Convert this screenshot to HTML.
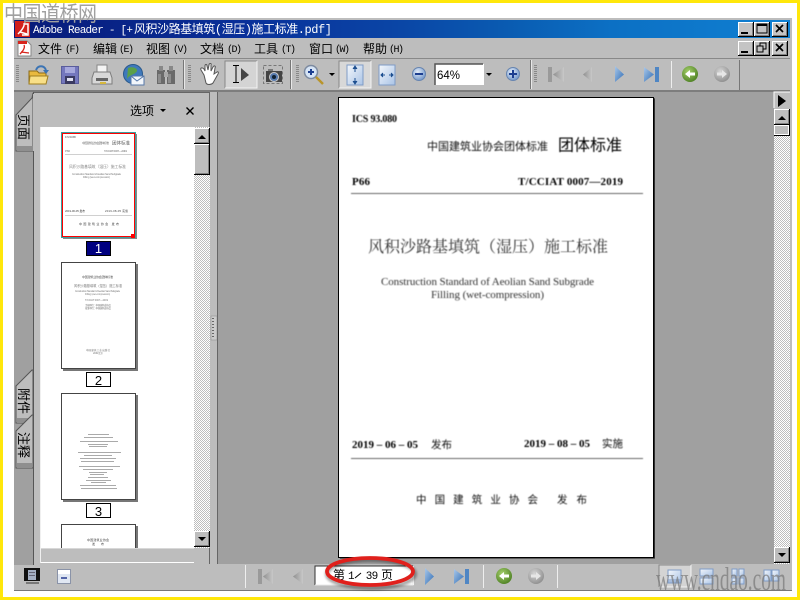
<!DOCTYPE html>
<html><head><meta charset="utf-8"><title>Adobe Reader</title>
<style>
html,body{margin:0;padding:0;background:#fff;width:800px;height:600px;overflow:hidden}
svg{display:block}
text{font-family:"Liberation Sans","WenQuanYi Zen Hei","Noto Sans CJK SC",sans-serif;fill:#000}
.m{font-family:"Liberation Mono","WenQuanYi Zen Hei",monospace}
.u{font-size:12px;font-family:"WenQuanYi Zen Hei","Noto Sans CJK SC",sans-serif}
.p{font-size:10px;font-family:"Liberation Mono",monospace}
.s{font-family:"Liberation Serif","Noto Serif CJK SC",serif}
.t{font-family:"Liberation Sans","Noto Sans CJK SC",sans-serif;font-size:3px;fill:#777}
</style></head><body>
<svg width="800" height="600" viewBox="0 0 800 600">
<defs>
<linearGradient id="tb" x1="0" x2="1" y1="0" y2="0"><stop offset="0" stop-color="#081a78"/><stop offset=".3" stop-color="#09309a"/><stop offset=".5" stop-color="#0a46a6"/><stop offset=".64" stop-color="#0a5cb2"/><stop offset=".77" stop-color="#0c70c4"/><stop offset="1" stop-color="#0f80d2"/></linearGradient>
<pattern id="ck" width="2" height="2" patternUnits="userSpaceOnUse"><rect width="2" height="2" fill="#fff"/><rect width="1" height="1" fill="#bdbdbd"/><rect x="1" y="1" width="1" height="1" fill="#bdbdbd"/></pattern>
<linearGradient id="blue" x1="0" x2="1" y1="0" y2="1"><stop offset="0" stop-color="#a9c8ea"/><stop offset="1" stop-color="#2f6cb4"/></linearGradient>
<linearGradient id="gr" x1="0" x2="1" y1="0" y2="0"><stop offset="0" stop-color="#8f8f8f"/><stop offset="1" stop-color="#c8c8c8"/></linearGradient>
<linearGradient id="pg" x1="0" x2="1" y1="0" y2="1"><stop offset="0" stop-color="#f4f7fb"/><stop offset="1" stop-color="#a9c3e6"/></linearGradient>
<radialGradient id="gc" cx=".4" cy=".35" r=".7"><stop offset="0" stop-color="#a5cf6b"/><stop offset="1" stop-color="#4c7f22"/></radialGradient>
<radialGradient id="gg" cx=".4" cy=".35" r=".7"><stop offset="0" stop-color="#d6d6d6"/><stop offset="1" stop-color="#8c8c8c"/></radialGradient>
<radialGradient id="bc" cx=".4" cy=".35" r=".7"><stop offset="0" stop-color="#e4edf8"/><stop offset="1" stop-color="#6d93c8"/></radialGradient>
<filter id="bl" x="-5%" y="-5%" width="110%" height="110%"><feGaussianBlur stdDeviation=".42"/></filter>
<filter id="bl2" x="-5%" y="-5%" width="110%" height="110%"><feGaussianBlur stdDeviation=".25"/></filter>
<filter id="sh" x="-10%" y="-30%" width="120%" height="160%"><feGaussianBlur stdDeviation="1.300"/></filter>
<g id="wb"><rect width="16" height="15" fill="#000"/><rect width="15" height="14" fill="#fff"/><rect x="1" y="1" width="14" height="13" fill="#808080"/><rect x="1" y="1" width="13" height="12" fill="#c4c4c4"/></g>
<g id="sb"><rect width="16" height="16" fill="#000"/><rect width="15" height="15" fill="#fff"/><rect x="1" y="1" width="14" height="14" fill="#808080"/><rect x="1" y="1" width="13" height="13" fill="#bdbdbd"/></g>
</defs>

<!-- frame -->
<rect width="800" height="600" fill="#ffe70a"/>
<rect x="3" y="3" width="794" height="594" fill="#fff"/>
<!-- window -->
<rect x="14" y="18" width="778" height="573" fill="#bdbdbd"/>
<rect x="14" y="590" width="778" height="1" fill="#777"/>
<!-- title -->
<rect x="14" y="20" width="776" height="18" fill="url(#tb)"/>
<rect x="15" y="21" width="15" height="16" fill="#d2201c"/>
<path d="M18 34 C22 30 25 26 24 23 M20 32 L27 34 M25 24 L28 24 L28 35 L22 35" stroke="#fff" stroke-width="1.500" fill="none"/>
<text class="m" x="33" y="33" textLength="100" style="font-size:11px;fill:#fff">Adobe Reader - [+</text>
<text class="m" x="134" y="33" textLength="198" style="font-size:12px;fill:#fff">风积沙路基填筑(湿压)施工标准.pdf]</text>
<use href="#wb" x="738" y="22"/><rect x="741" y="32" width="7" height="2" fill="#000"/>
<use href="#wb" x="754" y="22"/><rect x="757" y="24" width="10" height="9" fill="none" stroke="#000"/><rect x="757" y="24" width="10" height="2" fill="#000"/>
<use href="#wb" x="772" y="22"/><path d="M776 25 L783 32 M783 25 L776 32" stroke="#000" stroke-width="1.700"/>
<!-- menu -->
<rect x="14" y="38" width="776" height="20" fill="#bdbdbd"/>
<path d="M18 41 H27 L31 45 V56 H18Z" fill="#fff" stroke="#888"/><path d="M18 41 H27 V44 H18Z" fill="#d7251d"/><path d="M20 54 C24 50 25 47 24 45 M21 52 L29 53" stroke="#d7251d" stroke-width="1.300" fill="none"/>
<text class="u" x="38" y="53">文件</text><text class="p" x="65" y="52" textLength="15">(F)</text>
<text class="u" x="93" y="53">编辑</text><text class="p" x="119" y="52" textLength="15">(E)</text>
<text class="u" x="146" y="53">视图</text><text class="p" x="173" y="52" textLength="15">(V)</text>
<text class="u" x="200" y="53">文档</text><text class="p" x="227" y="52" textLength="15">(D)</text>
<text class="u" x="254" y="53">工具</text><text class="p" x="281" y="52" textLength="15">(T)</text>
<text class="u" x="309" y="53">窗口</text><text class="p" x="335" y="52" textLength="15">(W)</text>
<text class="u" x="363" y="53">帮助</text><text class="p" x="389" y="52" textLength="15">(H)</text>
<use href="#wb" x="738" y="41"/><rect x="741" y="51" width="7" height="2" fill="#000"/>
<use href="#wb" x="754" y="41"/><rect x="760" y="43" width="6" height="6" fill="none" stroke="#000"/><rect x="757" y="46" width="6" height="6" fill="#c4c4c4" stroke="#000"/>
<use href="#wb" x="772" y="41"/><path d="M776 44 L783 51 M783 44 L776 51" stroke="#000" stroke-width="1.700"/>
<!-- toolbar -->
<rect x="14" y="58" width="776" height="1" fill="#888"/>
<rect x="14" y="59" width="776" height="31" fill="#bdbdbd"/>
<rect x="14" y="90" width="776" height="2" fill="#7d7d7d"/>
<g fill="#888"><rect x="16" y="65" width="3" height="1"/><rect x="16" y="67" width="3" height="1"/><rect x="16" y="69" width="3" height="1"/><rect x="16" y="71" width="3" height="1"/><rect x="16" y="73" width="3" height="1"/><rect x="16" y="75" width="3" height="1"/><rect x="16" y="77" width="3" height="1"/><rect x="16" y="79" width="3" height="1"/><rect x="16" y="81" width="3" height="1"/></g>
<g fill="#888"><rect x="188" y="65" width="3" height="1"/><rect x="188" y="67" width="3" height="1"/><rect x="188" y="69" width="3" height="1"/><rect x="188" y="71" width="3" height="1"/><rect x="188" y="73" width="3" height="1"/><rect x="188" y="75" width="3" height="1"/><rect x="188" y="77" width="3" height="1"/><rect x="188" y="79" width="3" height="1"/><rect x="188" y="81" width="3" height="1"/></g>
<g fill="#888"><rect x="296" y="65" width="3" height="1"/><rect x="296" y="67" width="3" height="1"/><rect x="296" y="69" width="3" height="1"/><rect x="296" y="71" width="3" height="1"/><rect x="296" y="73" width="3" height="1"/><rect x="296" y="75" width="3" height="1"/><rect x="296" y="77" width="3" height="1"/><rect x="296" y="79" width="3" height="1"/><rect x="296" y="81" width="3" height="1"/></g>
<g fill="#888"><rect x="534" y="65" width="3" height="1"/><rect x="534" y="67" width="3" height="1"/><rect x="534" y="69" width="3" height="1"/><rect x="534" y="71" width="3" height="1"/><rect x="534" y="73" width="3" height="1"/><rect x="534" y="75" width="3" height="1"/><rect x="534" y="77" width="3" height="1"/><rect x="534" y="79" width="3" height="1"/><rect x="534" y="81" width="3" height="1"/></g>
<rect x="183" y="60" width="1" height="29" fill="#777"/><rect x="184" y="60" width="1" height="29" fill="#e8e8e8"/>
<rect x="290" y="60" width="1" height="29" fill="#777"/><rect x="291" y="60" width="1" height="29" fill="#e8e8e8"/>
<rect x="530" y="60" width="1" height="29" fill="#777"/><rect x="531" y="60" width="1" height="29" fill="#e8e8e8"/>
<rect x="739" y="60" width="1" height="30" fill="#777"/>
<rect x="671" y="61" width="1" height="27" fill="#eee"/>
<!-- open -->
<path d="M29 71 H37 L39 73 H46 V84 H29Z" fill="#e9b93e" stroke="#8a6a1a"/><path d="M30 76 H48 L46 84 H29Z" fill="#f8df87" stroke="#a07f20"/>
<path d="M36 70 C38 65 44 65 46 70" stroke="#3c74b4" stroke-width="2" fill="none"/><path d="M43 70 H49 L46 74Z" fill="#3c74b4"/>
<!-- save -->
<rect x="61.500" y="66.500" width="17" height="17" fill="#7477bd" stroke="#5a5d9c"/><rect x="65" y="67" width="10" height="6" fill="#a6a8dc"/><rect x="65" y="76" width="10" height="8" fill="#3a3a62"/><rect x="67" y="78" width="6" height="3" fill="#dfe0f0"/>
<!-- print -->
<rect x="97" y="65" width="10" height="7" fill="#f4f4f4" stroke="#888"/><path d="M94 72 H110 L112 78 V84 H92 V78Z" fill="#d8d8d8" stroke="#7d7d7d"/><rect x="96" y="78" width="12" height="3" fill="#666"/><rect x="100" y="82" width="6" height="2" fill="#d6b73c"/>
<!-- mail -->
<circle cx="133" cy="74" r="9.500" fill="#3f79bc" stroke="#2a5a8c"/><path d="M128 68 C132 66 138 68 137 71 C135 75 130 74 127 79Z" fill="#5ba04a"/>
<rect x="131" y="76" width="13" height="9" fill="#f2f6fb" stroke="#5778a8"/><path d="M131 76 L137 81 L144 76" stroke="#5778a8" fill="none"/>
<!-- binoculars -->
<path d="M157 70 H165 V84 H157Z M167 70 H175 V84 H167Z" fill="#6a6a6a"/><rect x="159" y="66" width="4" height="5" fill="#888"/><rect x="169" y="66" width="4" height="5" fill="#888"/><rect x="164" y="72" width="4" height="5" fill="#aaa"/><rect x="158" y="74" width="3" height="9" fill="#8d8d8d"/><rect x="168" y="74" width="3" height="9" fill="#8d8d8d"/>
<!-- hand -->
<path d="M204 75 L201 70 C200 68 202 67 204 69 L205 71 L205 66 C205 64 207 64 207 66 L208 70 L209 65 C209 63 212 63 211 65 L211 71 L213 67 C214 65 216 66 215 68 L214 74 L217 72 C218 71 219 73 218 74 L213 83 C211 85 207 85 206 83Z" fill="#fff" stroke="#555"/>
<!-- select -->
<rect x="225" y="61" width="32" height="27" fill="#d4d4d4"/><path d="M225 88 V61 H257" stroke="#888" fill="none"/><path d="M257 61 V88 H225" stroke="#f4f4f4" fill="none"/>
<path d="M233 65.500 H239 M236 65.500 V82.500 M233 82.500 H239" stroke="#000" fill="none"/><path d="M241 68 L249 75 L241 81Z" fill="#444"/>
<!-- camera -->
<rect x="263.500" y="65.500" width="19" height="18" fill="none" stroke="#777" stroke-dasharray="3 2"/><rect x="266" y="71" width="16" height="11" fill="#444"/><circle cx="274" cy="77" r="4.500" fill="#567aae" stroke="#ccc"/><circle cx="274" cy="77" r="2" fill="#123"/><rect x="268" y="69" width="5" height="2" fill="#777"/>
<!-- zoom -->
<circle cx="311" cy="72" r="6.500" fill="#d6e4f5" stroke="#7c8aa0" stroke-width="1.500"/><path d="M308 72 H314 M311 69 V75" stroke="#1d3f90" stroke-width="2"/><path d="M316 77 L323 84" stroke="#b9952c" stroke-width="2.500"/>
<path d="M329 73 H335 L332 76Z" fill="#000"/>
<!-- fit page -->
<rect x="339" y="61" width="32" height="27" fill="#d8d8d8"/><path d="M339 88 V61 H371" stroke="#888" fill="none"/><path d="M371 61 V88 H339" stroke="#f4f4f4" fill="none"/>
<rect x="347" y="65" width="16" height="20" fill="url(#pg)" stroke="#7f9cc6"/><path d="M355 68 V72 M353 69 L355 66 L357 69 M355 78 V82 M353 81 L355 84 L357 81" stroke="#1d4f90" fill="#1d4f90"/>
<!-- fit width -->
<rect x="379" y="65" width="16" height="20" fill="url(#pg)" stroke="#7f9cc6"/><path d="M381 75 H385 M383 73 L381 75 L383 77 M389 75 H393 M391 73 L393 75 L391 77" stroke="#1d4f90" fill="#1d4f90"/>
<!-- minus / input / plus -->
<circle cx="419" cy="74" r="6.500" fill="url(#bc)" stroke="#6785b0"/><rect x="415" y="73" width="8" height="2" fill="#1d3f90"/>
<rect x="435" y="64" width="49" height="21" fill="#fff"/><path d="M435 85 V64 H483" stroke="#555" stroke-width="1.500" fill="none"/>
<text x="437" y="79" style="font-size:11.500px;font-family:'Liberation Sans',sans-serif">64%</text>
<path d="M486 73 H492 L489 76Z" fill="#000"/>
<circle cx="513" cy="74" r="6.500" fill="url(#bc)" stroke="#6785b0"/><path d="M509 74 H517 M513 70 V78" stroke="#1d3f90" stroke-width="2"/>
<!-- nav top -->
<rect x="548" y="67" width="4" height="15" fill="#9a9a9a"/><path d="M553 74.500 L564 67 V82Z" fill="url(#gr)"/>
<path d="M583 74.500 L592 67 V82Z" fill="url(#gr)"/>
<path d="M615 66 L624 74.500 L615 82Z" fill="url(#blue)"/>
<path d="M644 67 L654 74.500 L644 82Z" fill="url(#blue)"/><rect x="655" y="67" width="4" height="15" fill="#4f86c4"/>
<circle cx="690" cy="74" r="8" fill="url(#gc)"/><path d="M685 74 L690 70 V72.500 H695 V75.500 H690 V78Z" fill="#fff"/>
<circle cx="722" cy="74" r="8" fill="url(#gg)"/><path d="M727 74 L722 70 V72.500 H717 V75.500 H722 V78Z" fill="#e6e6e6"/>

<!-- left strip -->
<rect x="14" y="92" width="19" height="473" fill="#a0a0a0"/>
<rect x="33" y="92" width="1" height="473" fill="#555"/>
<!-- panel -->
<rect x="34" y="92" width="176" height="472" fill="#bdbdbd"/>
<rect x="34" y="92" width="176" height="1" fill="#666"/>
<rect x="40" y="127" width="1" height="436" fill="#f0f0f0"/>
<rect x="209" y="92" width="1" height="472" fill="#666"/>
<!-- tabs -->
<path d="M33 93 L32 98 L16 115 V151 H33Z" fill="#bdbdbd" stroke="#555"/><rect x="33" y="94" width="1" height="57" fill="#bdbdbd"/>
<rect x="17" y="146" width="16" height="5" fill="#8f8f8f"/>
<path d="M32 370 L16 386 V423 H33 V370Z" fill="#bdbdbd" stroke="#555"/>
<rect x="17" y="418" width="15" height="5" fill="#8f8f8f"/>
<path d="M32 415 L16 431 V468 H33 V415Z" fill="#bdbdbd" stroke="#555"/>
<rect x="17" y="463" width="15" height="5" fill="#8f8f8f"/>
<text class="u" transform="translate(19,114) rotate(90)" style="font-size:13px">页面</text>
<text class="u" transform="translate(19,388) rotate(90)" style="font-size:13px">附件</text>
<text class="u" transform="translate(19,432) rotate(90)" style="font-size:13px">注释</text>
<text class="u" x="130" y="115">选项</text>
<path d="M160 109 H166 L163 112Z" fill="#000"/>
<path d="M186.500 107.500 L193.500 114.500 M193.500 107.500 L186.500 114.500" stroke="#000" stroke-width="1.400"/>
<!-- thumbs -->
<rect x="41" y="127" width="153" height="421" fill="#fff"/>
<rect x="41" y="548" width="153" height="15" fill="#bdbdbd"/>
<rect x="41" y="548" width="153" height="1" fill="#d8d8d8"/>
<rect x="41" y="562" width="153" height="1" fill="#fff"/>
<rect x="194" y="127" width="16" height="421" fill="url(#ck)"/>
<use href="#sb" x="194" y="128"/><path d="M198 139 H206 L202 135Z" fill="#000"/>
<rect x="194" y="144" width="16" height="31" fill="#000"/><rect x="194" y="144" width="15" height="30" fill="#fff"/><rect x="195" y="145" width="14" height="29" fill="#808080"/><rect x="195" y="145" width="13" height="28" fill="#bdbdbd"/>
<use href="#sb" x="194" y="531"/><path d="M198 537 H206 L202 541Z" fill="#000"/>
<!-- thumb 1 -->
<rect x="63" y="134" width="74" height="105" fill="#888"/>
<rect x="61.500" y="132.500" width="74" height="105" fill="#fff" stroke="#3aa0a0"/>
<rect x="62.500" y="133.500" width="72" height="103" fill="none" stroke="#f00"/>
<rect x="131" y="234" width="4" height="4" fill="#f00"/>
<g filter="url(#bl2)"><text class="t" x="65" y="138" textLength="11">ICS 93.080</text>
<text class="t" x="82" y="144" textLength="27">中国建筑业协会团体标准</text><text x="112" y="144.500" style="font-size:4.500px;fill:#555">团体标准</text>
<text class="t" x="65" y="152" textLength="5">P66</text><text class="t" x="104" y="152" textLength="23">T/CCIAT 0007—2019</text>
<rect x="65" y="154" width="67" height=".7" fill="#bbb"/>
<text x="69" y="168" style="font-size:3.800px;fill:#888">风积沙路基填筑（湿压）施工标准</text>
<text class="t" x="72" y="175" textLength="49" style="font-size:2.500px">Construction Standard of Aeolian Sand Subgrade</text>
<text class="t" x="83" y="178" textLength="27" style="font-size:2.500px">Filling (wet-compression)</text>
<text class="t" x="65" y="212" textLength="20" style="font-size:2.800px;fill:#444">2019-06-05 发布</text><text class="t" x="105" y="212" textLength="23" style="font-size:2.800px;fill:#444">2019-08-05 实施</text>
<rect x="65" y="215" width="67" height=".7" fill="#bbb"/>
<text class="t" x="79" y="225" textLength="40" style="fill:#444">中国建筑业协会 发布</text></g>
<rect x="86.500" y="241.500" width="24" height="14" fill="#000080" stroke="#000"/>
<text x="98.500" y="253" text-anchor="middle" style="fill:#fff;font-size:13px;font-family:'Liberation Sans',sans-serif">1</text>
<!-- thumb 2 -->
<rect x="63" y="264" width="75" height="107" fill="#777"/>
<rect x="61.500" y="262.500" width="74" height="106" fill="#fff" stroke="#444"/>
<g filter="url(#bl2)"><text class="t" x="82" y="278" textLength="31" style="fill:#555">中国建筑业协会团体标准</text>
<text class="t" x="74" y="287" textLength="48" style="font-size:3.200px">风积沙路基填筑（湿压）施工标准</text>
<text class="t" x="75" y="292" textLength="45" style="font-size:2.300px">Construction Standard of Aeolian Sand Subgrade</text>
<text class="t" x="85" y="295" textLength="25" style="font-size:2.300px">Filling (wet-compression)</text>
<text class="t" x="85" y="301" textLength="23" style="font-size:2.500px">T/CCIAT 0007—2019</text>
<text class="t" x="85" y="306" textLength="26" style="font-size:2.500px">主编单位：中国建筑业协会</text>
<text class="t" x="85" y="309" textLength="26" style="font-size:2.500px">批准单位：中国建筑业协会</text>
<text class="t" x="86" y="351" textLength="24" style="font-size:2.500px">中国建筑工业出版社</text>
<text class="t" x="93" y="354" textLength="10" style="font-size:2.500px">2019 北京</text></g>
<rect x="86.500" y="372.500" width="24" height="14" fill="#fff" stroke="#000"/>
<text x="98.500" y="385" text-anchor="middle" style="font-size:13px;font-family:'Liberation Sans',sans-serif">2</text>
<!-- thumb 3 -->
<rect x="63" y="395" width="75" height="107" fill="#777"/>
<rect x="61.500" y="393.500" width="74" height="106" fill="#fff" stroke="#444"/>
<g filter="url(#bl2)" fill="#aaa">
<rect x="88" y="434" width="21" height="1"/><rect x="84" y="437" width="29" height="1"/><rect x="80" y="441" width="38" height="1"/><rect x="88" y="444" width="20" height="1"/><rect x="89" y="446" width="18" height="1"/><rect x="78" y="452" width="43" height="1"/><rect x="84" y="455" width="28" height="1"/><rect x="80" y="458" width="36" height="1"/><rect x="81" y="461" width="33" height="1"/><rect x="79" y="466" width="41" height="1"/><rect x="83" y="469" width="30" height="1"/><rect x="89" y="472" width="18" height="1"/><rect x="90" y="474" width="14" height="1"/><rect x="88" y="477" width="20" height="1"/><rect x="86" y="480" width="25" height="1"/><rect x="91" y="482" width="15" height="1"/><rect x="80" y="485" width="36" height="1"/><rect x="81" y="488" width="36" height="1"/></g>
<rect x="86.500" y="503.500" width="24" height="14" fill="#fff" stroke="#000"/>
<text x="98.500" y="516" text-anchor="middle" style="font-size:13px;font-family:'Liberation Sans',sans-serif">3</text>
<!-- thumb 4 -->
<path d="M61.500 548 V524.500 H135.500 V548" fill="#fff" stroke="#444"/>
<rect x="136" y="526" width="2" height="22" fill="#777"/>
<text class="t" x="87" y="541" textLength="22" style="fill:#444">中国建筑业协会</text>
<text class="t" x="92" y="545" textLength="12" style="fill:#444">发 布</text>
<!-- splitter -->
<rect x="210" y="92" width="7" height="472" fill="#bdbdbd"/>
<rect x="211" y="316" width="6" height="24" fill="#ccc" stroke="#888" stroke-width=".5"/>
<path d="M213 318 V338" stroke="#666" stroke-dasharray="1 2" stroke-width="2"/>
<rect x="217" y="92" width="1" height="472" fill="#666"/>
<!-- main -->
<rect x="218" y="92" width="556" height="472" fill="#a0a0a0"/>
<rect x="774" y="110" width="16" height="454" fill="url(#ck)"/>
<rect x="774" y="92" width="16" height="16" fill="#bdbdbd"/><path d="M774 108 V92 H790" stroke="#fff" fill="none"/><path d="M778 95 L786 101 L778 107Z" fill="#000"/>
<use href="#sb" x="774" y="109"/><path d="M778 120 H786 L782 116Z" fill="#000"/>
<rect x="774" y="125" width="16" height="11" fill="#000"/><rect x="774" y="125" width="15" height="10" fill="#fff"/><rect x="775" y="126" width="13" height="8" fill="#bdbdbd"/>
<use href="#sb" x="774" y="547"/><path d="M778 553 H786 L782 557Z" fill="#000"/>
<!-- page -->
<rect x="340" y="99" width="315" height="460" fill="#5c5c5c"/>
<rect x="338.500" y="97.500" width="315" height="460" fill="#fff" stroke="#000"/>
<rect x="653" y="98" width="1.500" height="460" fill="#000"/>
<g filter="url(#bl)">
<text class="s" x="352" y="122" textLength="45" style="font-size:10px;font-weight:bold;fill:#000">ICS 93.080</text>
<text x="427" y="150" textLength="121" style="font-size:11px;fill:#111;font-family:'Noto Sans CJK SC',sans-serif">中国建筑业协会团体标准</text>
<text x="558" y="150.500" textLength="64" style="font-size:16px;fill:#000;font-family:'Noto Sans CJK SC',sans-serif">团体标准</text>
<text class="s" x="352" y="185" textLength="18" style="font-size:11px;font-weight:bold;fill:#000">P66</text>
<text class="s" x="518" y="185" textLength="105" style="font-size:11px;font-weight:bold;fill:#000">T/CCIAT 0007—2019</text>
<rect x="351" y="193" width="292" height="1" fill="#666"/>
<text class="s" x="368" y="252" textLength="240" style="font-size:16px;fill:#333">风积沙路基填筑（湿压）施工标准</text>
<text class="s" x="381" y="285" textLength="213" style="font-size:11px;fill:#333">Construction Standard of Aeolian Sand Subgrade</text>
<text class="s" x="431" y="298" textLength="113" style="font-size:11px;fill:#333">Filling (wet-compression)</text>
<text class="s" x="352" y="448" textLength="66" style="font-size:11px;font-weight:bold;fill:#000">2019 – 06 – 05</text>
<text x="431" y="448" textLength="21" style="font-size:10.500px;fill:#111;font-family:'Noto Sans CJK SC',sans-serif">发布</text>
<text class="s" x="524" y="447" textLength="66" style="font-size:11px;font-weight:bold;fill:#000">2019 – 08 – 05</text>
<text x="602" y="447" textLength="21" style="font-size:10.500px;fill:#111;font-family:'Noto Sans CJK SC',sans-serif">实施</text>
<rect x="351" y="458" width="292" height="1" fill="#666"/>
<text x="416" y="503" textLength="122" style="font-size:10.500px;fill:#111;font-family:'Noto Sans CJK SC',sans-serif">中国建筑业协会</text>
<text x="557" y="503" textLength="30" style="font-size:10.500px;fill:#111;font-family:'Noto Sans CJK SC',sans-serif">发布</text>
</g>
<!-- bottom -->
<rect x="14" y="565" width="776" height="25" fill="#bdbdbd"/>
<rect x="24" y="568" width="16" height="13" fill="#111"/><rect x="28" y="570" width="8" height="10" fill="#a4b0c4"/><rect x="29" y="572" width="6" height="1" fill="#667"/><rect x="29" y="575" width="6" height="1" fill="#667"/><rect x="26" y="582" width="13" height="2" fill="#777"/>
<rect x="57.500" y="569.500" width="13" height="14" fill="#e0e7f2" stroke="#8a93a8"/><rect x="58" y="570" width="12" height="4" fill="#fff"/><rect x="61" y="577" width="6" height="2" fill="#5566a8"/>
<rect x="245" y="565" width="1" height="23" fill="#eee"/>
<rect x="258" y="569" width="4" height="15" fill="#9a9a9a"/><path d="M263 576.500 L273 569 V584Z" fill="url(#gr)"/>
<path d="M293 576.500 L303 569 V584Z" fill="url(#gr)"/>
<rect x="315" y="566" width="99" height="19" fill="#fff"/><path d="M315 585 V566 H413" stroke="#333" fill="none"/><path d="M413 566 V585 H315" stroke="#e8e8e8" fill="none"/>
<text class="u" x="333" y="579">第</text>
<text x="348" y="579" style="font-size:11px;font-family:'Liberation Mono',monospace" textLength="4">1</text>
<path d="M355 578 L361 573" stroke="#000"/>
<text x="366" y="579" style="font-size:11px;font-family:'Liberation Sans',sans-serif" textLength="12">39</text>
<text class="u" x="381" y="579">页</text>
<ellipse cx="371" cy="574" rx="44" ry="14" fill="none" stroke="#000" stroke-width="4" opacity=".35" filter="url(#sh)"/>
<ellipse cx="370" cy="571.500" rx="43" ry="13.500" fill="none" stroke="#e0201c" stroke-width="3.800"/>
<path d="M425 568 L434 576.500 L425 585Z" fill="url(#blue)"/>
<path d="M454 569 L464 576.500 L454 584Z" fill="url(#blue)"/><rect x="465" y="569" width="4" height="15" fill="#4f86c4"/>
<rect x="483" y="565" width="1" height="23" fill="#eee"/>
<circle cx="504" cy="576" r="8" fill="url(#gc)"/><path d="M499 576 L504 572 V574.500 H509 V577.500 H504 V580Z" fill="#fff"/>
<circle cx="536" cy="576" r="8" fill="url(#gg)"/><path d="M541 576 L536 572 V574.500 H531 V577.500 H536 V580Z" fill="#e6e6e6"/>
<rect x="557" y="565" width="1" height="23" fill="#eee"/>
<rect x="659" y="565" width="32" height="22" fill="#d4d4d4"/><path d="M659 587 V565 H691" stroke="#888" fill="none"/><path d="M691 565 V587 H659" stroke="#f4f4f4" fill="none"/>
<rect x="668" y="570" width="13" height="13" fill="url(#pg)" stroke="#7f9cc6"/><rect x="668" y="579" width="13" height="4" fill="#7f9cc6" opacity=".5"/>
<rect x="700" y="569" width="13" height="7" fill="url(#pg)" stroke="#7f9cc6"/><rect x="700" y="578" width="13" height="6" fill="url(#pg)" stroke="#7f9cc6"/>
<rect x="732" y="569" width="5" height="7" fill="url(#pg)" stroke="#7f9cc6"/><rect x="739" y="569" width="5" height="7" fill="url(#pg)" stroke="#7f9cc6"/><rect x="732" y="578" width="5" height="6" fill="url(#pg)" stroke="#7f9cc6"/><rect x="739" y="578" width="5" height="6" fill="url(#pg)" stroke="#7f9cc6"/>
<rect x="764" y="570" width="7" height="11" fill="url(#pg)" stroke="#7f9cc6"/><rect x="772" y="570" width="7" height="11" fill="url(#pg)" stroke="#7f9cc6"/>
<!-- watermarks -->
<text x="656" y="590" textLength="130" lengthAdjust="spacingAndGlyphs" style="font-size:33px;fill:#777;fill-opacity:.7;font-family:'Liberation Serif',serif">www.cndao.com</text>
<text transform="translate(4,21) scale(1,1.120)" textLength="93" style="font-size:19px;fill:#a0a0a0;font-family:'WenQuanYi Zen Hei','Noto Sans CJK SC',sans-serif">中国道桥网</text>
</svg>
</body></html>
